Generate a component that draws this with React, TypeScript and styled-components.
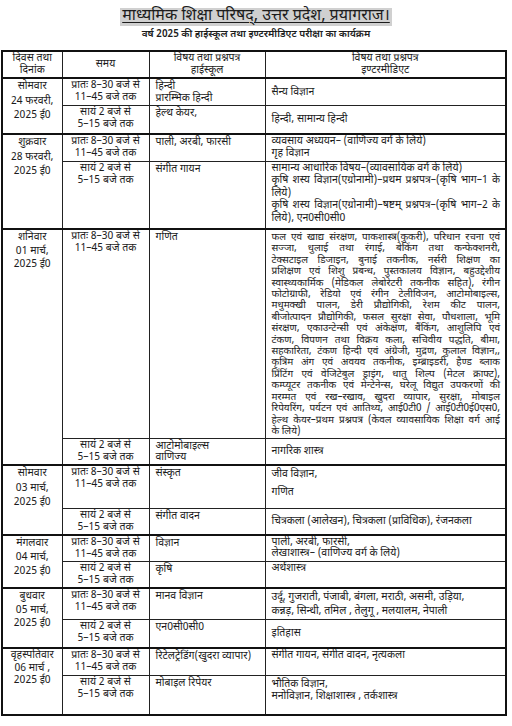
import React from "react";
import styled, { createGlobalStyle } from "styled-components";

const Global = createGlobalStyle`
  html, body { margin: 0; padding: 0; background: #fff; }
  body {
    font-family: "Noto Sans Devanagari", "Noto Sans", sans-serif;
    color: #1c1c1c;
  }
`;

const Page = styled.div`
  width: 512px;
  padding: 8px 0 0 1px;
  box-sizing: border-box;
`;

const Header = styled.header`
  display: flex;
  flex-direction: column;
  align-items: center;
  gap: 2px;
  margin-bottom: 8px;
  padding-right: 1px;
`;

const Title = styled.h1`
  margin: 0;
  font-size: 16px;
  font-weight: 400;
  line-height: 18px;
  background: #d0d0d0;
  padding: 0 2px;
  text-decoration: underline;
  text-underline-offset: 2px;
  text-decoration-thickness: 1px;
`;

const Subtitle = styled.div`
  font-size: 10px;
  font-weight: 600;
  line-height: 14px;
`;

const Table = styled.table`
  width: 504px;
  border-collapse: collapse;
  border: 2px solid #111;
  table-layout: fixed;
  font-size: 10.5px;
  line-height: 11.5px;
`;

const Col = styled.col<{ $w: number }>`
  width: ${(p) => p.$w}px;
`;

const Th = styled.th`
  border: 1px solid #222;
  font-weight: 400;
  text-align: center;
  vertical-align: middle;
  padding: 1px 3px 0;
  height: 27px;
  box-sizing: border-box;
  line-height: 12px;
  font-size: 10.5px;
  overflow: hidden;
`;

const DayTr = styled.tr`
  border-top: 2px solid #111;
`;

const DateCell = styled.td<{ $lh: number }>`
  border: 1px solid #222;
  text-align: center;
  vertical-align: top;
  padding: 1px 2px 0;
  font-size: 10.5px;
  line-height: ${(p) => p.$lh}px;
  overflow: hidden;
`;

const TimeCell = styled.td<{ $h: number }>`
  border: 1px solid #222;
  text-align: center;
  vertical-align: top;
  padding: 1px 2px 0;
  height: ${(p) => p.$h}px;
  box-sizing: border-box;
  line-height: 12px;
  overflow: hidden;
`;

const SubjectCell = styled.td<{ $v: "top" | "middle"; $lh: number; $pt: number; $fs: number }>`
  border: 1px solid #222;
  text-align: left;
  vertical-align: ${(p) => p.$v};
  padding: ${(p) => p.$pt}px 5px 0 6px;
  font-size: ${(p) => p.$fs}px;
  line-height: ${(p) => p.$lh}px;
  overflow: hidden;
`;

const Line = styled.span`
  display: block;
`;

const JustLine = styled.span`
  display: block;
  text-align: justify;
  text-align-last: justify;
`;

type Slot = {
  h: number;
  time: string[];
  hs: string[];
  inter: string[];
  just?: boolean;
  iv?: "top" | "middle";
  lh?: number;
  pt?: number;
  fs?: number;
};

type Day = { date: string[]; lh: number; slots: Slot[] };

const M = ["प्रातः 8–30 बजे से", "11–45 बजे तक"];
const E = ["सायं 2 बजे से", "5–15 बजे तक"];

const big = [
  "फल एवं खाद्य संरक्षण, पाकशास्त्र(कुकरी), परिधान रचना एवं",
  "सज्जा, धुलाई तथा रंगाई, बेकिंग तथा कन्फेक्शनरी,",
  "टेक्सटाइल डिजाइन, बुनाई तकनीक, नर्सरी शिक्षण का",
  "प्रशिक्षण एवं शिशु प्रबन्ध, पुस्तकालय विज्ञान, बहुउद्देशीय",
  "स्वास्थ्यकार्मिक (मेडिकल लेबोरेटरी तकनीक सहित), रंगीन",
  "फोटोग्राफी, रेडियो एवं रंगीन टेलीविजन, आटोमोबाइल्स,",
  "मधुमक्खी पालन, डेरी प्रौद्योगिकी, रेशम कीट पालन,",
  "बीजोत्पादन प्रौद्योगिकी, फसल सुरक्षा सेवा, पौधशाला, भूमि",
  "संरक्षण, एकाउन्टेन्सी एवं अंकेक्षण, बैंकिंग, आशुलिपि एवं",
  "टंकण, विपणन तथा विक्रय कला, सचिवीय पद्धति, बीमा,",
  "सहकारिता, टंकण हिन्दी एवं अंग्रेजी, मुद्रण, कुलाल विज्ञान,,",
  "कृत्रिम अंग एवं अवयव तकनीक, इम्ब्राइडरी, हैण्ड ब्लाक",
  "प्रिंटिंग एवं वेजिटेबुल ड्राइंग, धातु शिल्प (मेटल क्राफ्ट),",
  "कम्प्यूटर तकनीक एवं मेन्टेनेन्स, घरेलू विद्युत उपकरणों की",
  "मरम्मत एवं रख–रखाव, खुदरा व्यापार, सुरक्षा, मोबाइल",
  "रिपेयरिंग, पर्यटन एवं आतिथ्य, आई0टी0 / आई0टी0ई0एस0,",
  "हेल्थ केयर–प्रथम प्रश्नपत्र (केवल व्यावसायिक शिक्षा वर्ग आई",
  "के लिये)",
];

const days: Day[] = [
  {
    date: ["सोमवार", "24 फरवरी,", "2025 ई0"],
    lh: 14.5,
    slots: [
      { h: 27, time: M, hs: ["हिन्दी", "प्रारम्भिक हिन्दी"], inter: ["सैन्य विज्ञान"], iv: "middle" },
      { h: 29, time: E, hs: ["हेल्थ केयर,"], inter: ["हिन्दी, सामान्य हिन्दी"], iv: "middle" },
    ],
  },
  {
    date: ["शुक्रवार", "28 फरवरी,", "2025 ई0"],
    lh: 14.5,
    slots: [
      { h: 27, time: M, hs: ["पाली, अरबी, फारसी"], inter: ["व्यवसाय अध्ययन– (वाणिज्य वर्ग के लिये)", "गृह विज्ञान"], lh: 12 },
      {
        h: 68,
        time: E,
        hs: ["संगीत गायन"],
        just: true,
        lh: 12.6,
        inter: [
          "सामान्य आधारिक विषय–(व्यावसायिक वर्ग के लिये)",
          "कृषि शस्य विज्ञान(एग्रोनामी)–प्रथम प्रश्नपत्र–(कृषि भाग–1 के",
          "लिये)",
          "कृषि शस्य विज्ञान(एग्रोनामी)–षष्टम् प्रश्नपत्र–(कृषि भाग–2 के",
          "लिये), एन0सी0सी0",
        ],
      },
    ],
  },
  {
    date: ["शनिवार", "01 मार्च,", "2025 ई0"],
    lh: 13.5,
    slots: [
      { h: 209, time: M, hs: ["गणित"], inter: big, just: true, lh: 11.4, pt: 2, fs: 10 },
      { h: 27, time: E, hs: ["आटोमोबाइल्स", "वाणिज्य"], inter: ["नागरिक शास्त्र"], iv: "middle" },
    ],
  },
  {
    date: ["सोमवार", "03 मार्च,", "2025 ई0"],
    lh: 14.5,
    slots: [
      { h: 43, time: M, hs: ["संस्कृत"], inter: ["जीव विज्ञान,", "गणित"], lh: 18, pt: 0 },
      { h: 25, time: E, hs: ["संगीत वादन"], inter: ["चित्रकला (आलेखन),  चित्रकला (प्राविधिक), रंजनकला"], iv: "middle" },
    ],
  },
  {
    date: ["मंगलवार", "04 मार्च,", "2025 ई0"],
    lh: 14,
    slots: [
      { h: 25, time: M, hs: ["विज्ञान"], inter: ["पाली, अरबी, फारसी,", "लेखाशास्त्र– (वाणिज्य वर्ग के लिये)"], lh: 11.5 },
      { h: 27, time: E, hs: ["कृषि"], inter: ["अर्थशास्त्र"] },
    ],
  },
  {
    date: ["बुधवार", "05 मार्च,", "2025 ई0"],
    lh: 13.5,
    slots: [
      {
        h: 31,
        time: M,
        hs: ["मानव विज्ञान"],
        lh: 13.5,
        pt: 2,
        inter: ["उर्दू, गुजराती, पंजाबी, बंगला, मराठी, असमी, उड़िया,", "कन्नड़, सिन्धी,  तमिल , तेलुगू ,  मलयालम,  नेपाली"],
      },
      { h: 29, time: E, hs: ["एन0सी0सी0"], inter: ["इतिहास"], iv: "middle" },
    ],
  },
  {
    date: ["वृहस्पतिवार", "06 मार्च ,", "2025 ई0"],
    lh: 12.5,
    slots: [
      { h: 27, time: M, hs: ["रिटेलट्रेडिंग(खुदरा व्यापार)"], inter: ["संगीत गायन, संगीत वादन, नृत्यकला"] },
      { h: 40, time: E, hs: ["मोबाइल रिपेयर"], inter: ["भौतिक विज्ञान,", "मनोविज्ञान, शिक्षाशास्त्र , तर्कशास्त्र"], lh: 12.5, pt: 3 },
    ],
  },
];

const Lines = ({ lines, justify }: { lines: string[]; justify?: boolean }) => (
  <>
    {lines.map((l, i) => {
      const isJust = justify && i < lines.length - 1 && !l.endsWith(")");
      return isJust ? <JustLine key={i}>{l}</JustLine> : <Line key={i}>{l}</Line>;
    })}
  </>
);

export default function App() {
  return (
    <Page>
      <Global />
      <Header>
        <Title>माध्यमिक शिक्षा परिषद्, उत्तर प्रदेश, प्रयागराज।</Title>
        <Subtitle>वर्ष 2025 की हाईस्कूल तथा इण्टरमीडिएट परीक्षा का कार्यक्रम</Subtitle>
      </Header>
      <Table>
        <colgroup>
          <Col $w={60} />
          <Col $w={87} />
          <Col $w={116} />
          <Col $w={241} />
        </colgroup>
        <thead>
          <tr>
            <Th>
              <Line>दिवस तथा</Line>
              <Line>दिनांक</Line>
            </Th>
            <Th>समय</Th>
            <Th>
              <Line>विषय तथा प्रश्नपत्र</Line>
              <Line>हाईस्कूल</Line>
            </Th>
            <Th>
              <Line>विषय तथा प्रश्नपत्र</Line>
              <Line>इण्टरमीडिएट</Line>
            </Th>
          </tr>
        </thead>
        <tbody>
          {days.map((d, di) =>
            d.slots.map((s, si) => {
              const cells = (
                <>
                  {si === 0 && (
                    <DateCell rowSpan={d.slots.length} $lh={d.lh}>
                      <Lines lines={d.date} />
                    </DateCell>
                  )}
                  <TimeCell $h={s.h}>
                    <Lines lines={s.time} />
                  </TimeCell>
                  <SubjectCell $v="top" $lh={11.5} $pt={2} $fs={10.5}>
                    <Lines lines={s.hs} />
                  </SubjectCell>
                  <SubjectCell $v={s.iv ?? "top"} $lh={s.lh ?? 11.5} $pt={s.pt ?? 1} $fs={s.fs ?? 10.5}>
                    <Lines lines={s.inter} justify={s.just} />
                  </SubjectCell>
                </>
              );
              return si === 0 ? (
                <DayTr key={`${di}-${si}`}>{cells}</DayTr>
              ) : (
                <tr key={`${di}-${si}`}>{cells}</tr>
              );
            })
          )}
        </tbody>
      </Table>
    </Page>
  );
}
